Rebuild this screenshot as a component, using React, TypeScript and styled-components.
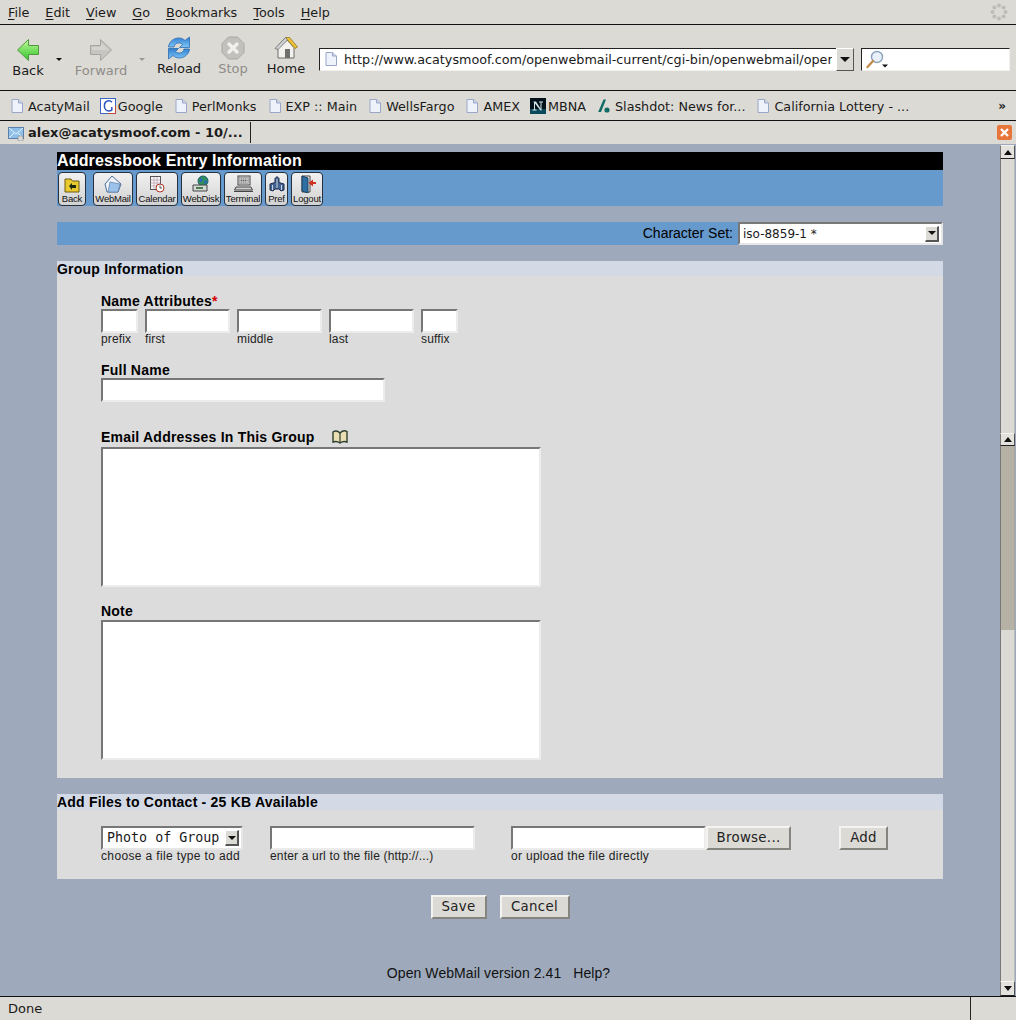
import React, { ReactElement } from 'react';
import styled, { createGlobalStyle } from 'styled-components';

const GlobalStyle = createGlobalStyle`
  html, body {
    margin: 0;
    padding: 0;
    width: 1016px;
    height: 1020px;
    overflow: hidden;
    background: #dcdad5;
  }
  * { box-sizing: border-box; }
`;

const CHROME_FONT = `"DejaVu Sans", sans-serif`;
const PAGE_FONT = `"Liberation Sans", Arial, sans-serif`;

const Window = styled.div`
  width: 1016px;
  height: 1020px;
  display: flex;
  flex-direction: column;
  font-family: ${CHROME_FONT};
  font-size: 13px;
  color: #1a1a1a;
`;

/* menu bar */
const MenuBar = styled.div`
  height: 25px;
  flex: none;
  display: flex;
  align-items: center;
  padding: 0 8px;
  gap: 16px;
  font-size: 12.75px;
  background: #dcdad5;
  border-bottom: 1px solid #111;
`;

const MenuItem = styled.span`
  line-height: 24px;
  padding-top: 1px;
  u { text-underline-offset: 2px; }
`;

const Throbber = styled.svg`
  margin-left: auto;
  margin-right: -1px;
`;

/* navigation toolbar */
const NavBar = styled.div`
  height: 66px;
  flex: none;
  display: flex;
  align-items: flex-start;
  padding-left: 4px;
  background: #dcdad5;
  border-bottom: 1px solid #111;
`;

const NavButton = styled.div<{ $w: number; $top: number; $off?: boolean }>`
  width: ${p => p.$w}px;
  padding-top: ${p => p.$top}px;
  display: flex;
  flex-direction: column;
  align-items: center;
  line-height: 16px;
  color: ${p => (p.$off ? '#8e8d89' : '#1a1a1a')};
`;

const NavIcon = styled.svg`
  display: block;
  margin-bottom: 1px;
`;

const DropArrow = styled.div<{ $w: number; $off?: boolean }>`
  width: ${p => p.$w}px;
  padding-top: 33px;
  display: flex;
  justify-content: center;
  &::after {
    content: '';
    border-left: 3px solid transparent;
    border-right: 3px solid transparent;
    border-top: 3px solid ${p => (p.$off ? '#999' : '#111')};
  }
`;

const UrlGroup = styled.div`
  margin: 23px 0 0 3px;
  display: flex;
  align-items: stretch;
  height: 23px;
`;

const UrlBox = styled.div`
  width: 517px;
  display: flex;
  align-items: center;
  padding: 0 0 1px 3px;
  background: #fff;
  border: 1px solid #222;
  border-right: none;
  border-bottom: 1px solid #f2f1ee;
  white-space: nowrap;
  overflow: hidden;
  font-size: 12.75px;
`;

const UrlText = styled.span`
  margin-left: 5px;
  width: 488px;
  overflow: hidden;
  display: block;
`;

const ComboButton = styled.div`
  width: 18px;
  display: flex;
  align-items: center;
  justify-content: center;
  background: #dcdad5;
  border: 1px solid #222;
  border-top-color: #fff;
  border-left-color: #fff;
  border-right-color: #555;
  border-bottom-color: #555;
  &::after {
    content: '';
    border-left: 5px solid transparent;
    border-right: 5px solid transparent;
    border-top: 5px solid #111;
  }
`;

const SearchBox = styled.div`
  width: 149px;
  margin-left: 7px;
  display: flex;
  align-items: center;
  padding-left: 3px;
  background: #fff;
  border: 1px solid #222;
  border-right-color: #f2f1ee;
  border-bottom-color: #f2f1ee;
`;

/* bookmarks */
const BookmarkBar = styled.div`
  height: 30px;
  flex: none;
  display: flex;
  align-items: center;
  padding: 1px 10px 0 9px;
  gap: 10px;
  font-size: 12.75px;
  background: #dcdad5;
  border-bottom: 1px solid #111;
  white-space: nowrap;
`;

const Bookmark = styled.div<{ $gap?: number }>`
  display: flex;
  align-items: center;
  gap: ${p => p.$gap ?? 3}px;
`;

const Chevron = styled.span`
  margin-left: auto;
  font-weight: bold;
  font-size: 12px;
`;

/* tabs */
const TabBar = styled.div`
  height: 23px;
  flex: none;
  display: flex;
  align-items: center;
  justify-content: space-between;
  padding-right: 4px;
  background: #dcdad5;
`;

const Tab = styled.div`
  width: 251px;
  height: 21px;
  display: flex;
  align-items: center;
  padding-left: 8px;
  gap: 4px;
  font-weight: bold;
  white-space: nowrap;
  border-right: 1px solid #222;
`;

const CloseTab = styled.div`
  width: 15px;
  height: 15px;
  border-radius: 2px;
  background: #e8763a;
  display: flex;
  align-items: center;
  justify-content: center;
`;

/* main viewport */
const Viewport = styled.div`
  flex: 1;
  min-height: 0;
  display: flex;
  background: #9eaabb;
`;

const Page = styled.div`
  width: 1000px;
  flex: none;
  padding: 8px 57px 0;
  font-family: ${PAGE_FONT};
  font-size: 14px;
  color: #000;
`;

const TitleBar = styled.div`
  height: 18px;
  background: #000;
  color: #fff;
  font-weight: bold;
  font-size: 16px;
  line-height: 18px;
  letter-spacing: 0.17px;
  white-space: nowrap;
`;

const IconBand = styled.div`
  height: 36px;
  background: #6699cc;
  display: flex;
  align-items: flex-end;
  padding-left: 1px;
  gap: 3px;
`;

const ToolButton = styled.div<{ $w: number; $ml?: number }>`
  width: ${p => p.$w}px;
  height: 34px;
  margin-left: ${p => p.$ml ?? 0}px;
  border: 1px solid #26313f;
  border-radius: 4px;
  background: linear-gradient(#f1f1f1, #d2d2d2);
  display: flex;
  flex-direction: column;
  align-items: center;
  padding-top: 2px;
  font-size: 9.5px;
  line-height: 11px;
  letter-spacing: -0.2px;
  color: #111;
  white-space: nowrap;
  overflow: hidden;
`;

const ToolIcon = styled.svg`
  display: block;
  height: 18px;
  width: 20px;
  flex: none;
`;

const CharsetBand = styled.div`
  height: 23px;
  margin-top: 16px;
  background: #6699cc;
  display: flex;
  align-items: center;
  justify-content: flex-end;
  gap: 5px;
`;

const CharsetLabel = styled.span`
  padding-bottom: 2px;
`;

const SelectBox = styled.div<{ $w: number; $mono?: boolean }>`
  width: ${p => p.$w}px;
  height: ${p => (p.$mono ? 24 : 23)}px;
  display: flex;
  align-items: center;
  justify-content: space-between;
  padding: 0 2px 0 ${p => (p.$mono ? 4 : 3)}px;
  background: #fff;
  border-top: 2px solid #777;
  border-left: 2px solid #777;
  border-right: 2px solid #e6e6e6;
  border-bottom: 2px solid #e6e6e6;
  font-family: ${p => (p.$mono ? `"DejaVu Sans Mono", monospace` : CHROME_FONT)};
  font-size: ${p => (p.$mono ? '13.33px' : '12px')};
  color: #1a1a1a;
  white-space: nowrap;
`;

const SelectText = styled.span`
  margin-top: -1px;
`;

const SelectArrow = styled.span`
  width: 14px;
  height: 16px;
  flex: none;
  background: #dcdad5;
  border-top: 1px solid #fff;
  border-left: 1px solid #fff;
  border-right: 2px solid #555;
  border-bottom: 2px solid #555;
  display: flex;
  align-items: center;
  justify-content: center;
  &::after {
    content: '';
    border-left: 4px solid transparent;
    border-right: 4px solid transparent;
    border-top: 4px solid #111;
  }
`;

const SectionHeader = styled.div<{ $h: number }>`
  height: ${p => p.$h}px;
  margin-top: 16px;
  background: #d3dae6;
  font-weight: bold;
  font-size: 14px;
  line-height: 17px;
  letter-spacing: 0.22px;
  white-space: nowrap;
`;

const GroupBody = styled.div`
  background: #dcdcdc;
  padding: 17px 0 18px 44px;
`;

const FieldLabel = styled.div<{ $mt?: number; $h: number }>`
  height: ${p => p.$h}px;
  margin-top: ${p => p.$mt ?? 0}px;
  line-height: 16px;
  font-weight: bold;
  font-size: 14px;
  letter-spacing: 0.22px;
  display: flex;
  align-items: flex-start;
  gap: 16px;
  white-space: nowrap;
`;

const Required = styled.span`
  color: #d40000;
`;

const NameRow = styled.div`
  display: flex;
  gap: 7px;
`;

const NameCol = styled.div<{ $w: number }>`
  width: ${p => p.$w}px;
  display: flex;
  flex-direction: column;
`;

const TextBox = styled.input<{ $w?: number }>`
  display: block;
  width: ${p => (p.$w ? `${p.$w}px` : '100%')};
  height: 24px;
  margin: 0;
  padding: 0 2px;
  background: #fff;
  border-style: solid;
  border-width: 2px;
  border-color: #777 #ececec #ececec #777;
  outline: none;
`;

const TextArea = styled.textarea`
  display: block;
  width: 440px;
  height: 140px;
  margin: 0;
  padding: 2px;
  resize: none;
  background: #fff;
  border-style: solid;
  border-width: 2px;
  border-color: #777 #ececec #ececec #777;
  outline: none;
`;

const Caption = styled.div<{ $ls?: number }>`
  font-size: 12px;
  line-height: 13px;
  letter-spacing: ${p => p.$ls ?? 0.15}px;
  color: #222;
  white-space: nowrap;
`;

const FileBody = styled.div`
  height: 69px;
  background: #dcdcdc;
  padding: 16px 0 0 44px;
  display: flex;
  align-items: flex-start;
`;

const FileCol = styled.div<{ $w: number }>`
  width: ${p => p.$w}px;
  flex: none;
`;

const FileRow = styled.div`
  display: flex;
`;

const PushButton = styled.button<{ $w: number; $h?: number }>`
  width: ${p => p.$w}px;
  height: ${p => p.$h ?? 24}px;
  margin: 0;
  padding: 0 0 2px;
  background: #dcdad5;
  border-style: solid;
  border-width: 2px;
  border-color: #f4f3f0 #85847f #85847f #f4f3f0;
  font-family: ${CHROME_FONT};
  font-size: 13.33px;
  letter-spacing: 0.3px;
  color: #222;
`;

const FormActions = styled.div`
  margin-top: 16px;
  display: flex;
  justify-content: center;
  gap: 13px;
`;

const Footer = styled.div`
  margin-top: 46px;
  padding-right: 3px;
  text-align: center;
  line-height: 16px;
  letter-spacing: 0.08px;
  white-space: pre;
  color: #111;
`;

/* scrollbar */
const Scrollbar = styled.div`
  width: 16px;
  flex: none;
  display: flex;
  flex-direction: column;
  padding-top: 1px;
  padding-right: 1px;
`;

const ScrollButton = styled.div<{ $h: number; $down?: boolean }>`
  height: ${p => p.$h}px;
  flex: none;
  background: #e4e2dd;
  border: 1px solid #f4f3f0;
  border-left-color: #777;
  border-right-color: #555;
  border-bottom-color: #222;
  display: flex;
  align-items: center;
  justify-content: center;
  &::after {
    content: '';
    border-left: 4px solid transparent;
    border-right: 4px solid transparent;
    ${p => (p.$down ? 'border-top: 5px solid #111;' : 'border-bottom: 5px solid #111;')}
  }
`;

const ScrollTrack = styled.div<{ $h?: number; $thumb?: boolean }>`
  ${p => (p.$h ? `height: ${p.$h}px; flex: none;` : 'flex: 1;')}
  background: ${p => (p.$thumb ? '#b5b2a5' : '#dcdad5')};
  border-left: 1px solid #777;
  border-right: 1px solid ${p => (p.$thumb ? '#a9a699' : '#bbb')};
`;

/* status bar */
const StatusBar = styled.div`
  height: 24px;
  flex: none;
  display: flex;
  align-items: center;
  padding-left: 8px;
  background: #dcdad5;
  border-top: 1px solid #111;
`;

const StatusGrip = styled.div`
  margin-left: auto;
  width: 46px;
  height: 100%;
  border-left: 1px solid #222;
`;

/* drawings */
const PageIcon = (): ReactElement => (
  <svg width="16" height="16" viewBox="0 0 16 16">
    <path d="M3 1.500h6.500L13.500 5v9.500H3z" fill="#eef2fb" stroke="#9aa6c8" />
    <path d="M9.500 1.500V5h4" fill="#cdd6ee" stroke="#9aa6c8" />
  </svg>
);

const GoogleIcon = (): ReactElement => (
  <svg width="16" height="16" viewBox="0 0 16 16">
    <rect x="0.500" y="0.500" width="15" height="15" fill="#fff" stroke="#3a66c4" />
    <path d="M15.500 8v7.500H8" fill="none" stroke="#c9463a" />
    <path d="M12 4.200C11 3 9.600 2.600 8.400 2.800 5.800 3.200 4.400 5.400 4.400 8c0 2.800 1.800 5 4.400 5 1.200 0 2.200-.3 3-.8V9" fill="none" stroke="#2a58c0" strokeWidth="1.500" />
  </svg>
);

const NetscapeIcon = (): ReactElement => (
  <svg width="16" height="16" viewBox="0 0 16 16">
    <rect width="16" height="16" fill="#03111a" />
    <rect y="11" width="16" height="5" fill="#0b4a5a" />
    <path d="M3.500 3.500h2.500l4.500 7V4.500h-1.500v-1h4v1h-1.500V12.500h-1L5 5.500v6h1.500v1h-4v-1H4V4.500H3.500z" fill="#cfe4ea" />
  </svg>
);

const SlashdotIcon = (): ReactElement => (
  <svg width="16" height="16" viewBox="0 0 16 16">
    <path d="M7.500 1.500h2.500L5 14H2.200z" fill="#0f6b63" />
    <circle cx="11" cy="12" r="2.600" fill="#0f6b63" />
  </svg>
);

const MailTabIcon = (): ReactElement => (
  <svg width="16" height="16" viewBox="0 0 16 16">
    <rect x="0.500" y="2.500" width="15" height="11" fill="#8fc0ea" stroke="#5b7fa8" />
    <path d="M1 3l7 6 7-6M1 13l5-5M15 13l-5-5" fill="none" stroke="#e8f2fb" />
    <rect x="10" y="11" width="5" height="5" rx="1" fill="#d9d9d9" stroke="#777" strokeWidth="0.500" />
  </svg>
);

const BackIcon = (): ReactElement => (
  <NavIcon width="24" height="24" viewBox="0 0 24 24">
    <defs>
      <linearGradient id="backFill" x1="0" y1="0" x2="0" y2="1">
        <stop offset="0" stopColor="#c4f99a" />
        <stop offset="1" stopColor="#2dc52a" />
      </linearGradient>
    </defs>
    <path d="M1.500 12L12.500 1.500V7.500H22.500V16.500H12.500V22.500z" fill="url(#backFill)" stroke="#4f9a3e" strokeWidth="1" strokeLinejoin="round" />
  </NavIcon>
);

const ForwardIcon = (): ReactElement => (
  <NavIcon width="24" height="24" viewBox="0 0 24 24">
    <path d="M22.500 12L11.500 1.500V7.500H1.500V16.500H11.500V22.500z" fill="#c6c5c1" stroke="#a5a4a0" strokeLinejoin="round" />
    <path d="M3 9h9V4.500L20 12H3z" fill="#d4d3cf" />
  </NavIcon>
);

const ReloadIcon = (): ReactElement => (
  <NavIcon width="24" height="24" viewBox="0 0 24 24">
    <defs>
      <linearGradient id="reloadFill" x1="0" y1="0" x2="0" y2="1">
        <stop offset="0" stopColor="#2f7fd0" />
        <stop offset="1" stopColor="#7fc6f6" />
      </linearGradient>
    </defs>
    <path d="M1.500 11C2 5.500 7 2 11.500 2c3 0 5 1 6.500 2.500L22.500 1V11.500H12.500L15.500 8.500C14.500 7.500 13 7 11.500 7 9 7 7.500 8.500 7 11z" fill="url(#reloadFill)" stroke="#2c6cb0" strokeWidth="0.800" />
    <path d="M22.500 13C22 18.500 17 22 12.500 22c-3 0-5-1-6.500-2.500L1.500 23V12.500H11.500L8.500 15.500C9.500 16.500 11 17 12.500 17 15 17 16.500 15.500 17 13z" fill="url(#reloadFill)" stroke="#2c6cb0" strokeWidth="0.800" />
  </NavIcon>
);

const StopIcon = (): ReactElement => (
  <NavIcon width="24" height="24" viewBox="0 0 24 24">
    <path d="M7.500 1h9L23 7.500v9L16.500 23h-9L1 16.500v-9z" fill="#c2c1bd" stroke="#a9a8a4" />
    <path d="M8 8l8 8M16 8l-8 8" stroke="#f1f0ec" strokeWidth="3.400" strokeLinecap="round" />
  </NavIcon>
);

const HomeIcon = (): ReactElement => (
  <NavIcon width="24" height="24" viewBox="0 0 24 24">
    <path d="M4 11.500V22h16V11.500L13 4z" fill="#f3f2ee" stroke="#6d6c68" />
    <path d="M3 11L11.500 1.500H15.500l8 9.500-2.500 1.500-7.500-8.500z" fill="#f2c233" stroke="#8a7420" strokeWidth="0.800" />
    <path d="M1 12.500l3 1L13.500 4l-2-2.500z" fill="#cfd3d8" stroke="#6d6c68" strokeWidth="0.800" />
    <rect x="11" y="13" width="5" height="9" fill="#6f6f6d" />
  </NavIcon>
);

const SearchIcon = (): ReactElement => (
  <svg width="26" height="20" viewBox="0 0 26 20">
    <circle cx="12" cy="7" r="5.500" fill="#e8f1fb" stroke="#8aa0bb" strokeWidth="1.400" />
    <path d="M8 11l-5.500 6" stroke="#c08a50" strokeWidth="2.400" strokeLinecap="round" />
    <path d="M17 14.500h6l-3 3z" fill="#111" />
  </svg>
);

const BookIcon = (): ReactElement => (
  <svg width="18" height="16" viewBox="0 0 18 16">
    <path d="M2 3c2.500-1.500 5-1 7 1 2-2 4.500-3 7-1.500V13c-2.500-1-5-.5-7 1-2-1.500-4.500-2-7-1z" fill="#eadfb4" stroke="#2f3f30" strokeWidth="1.400" />
    <path d="M9 4V14" stroke="#2f3f30" strokeWidth="1.200" />
  </svg>
);

const ToolGlyphs: Record<string, ReactElement> = {
  back: (
    <>
      <path d="M3 4h6l1.500 2H17v11H3z" fill="#e9c92e" stroke="#6c5c10" />
      <path d="M7 11l3-3v2h4v3h-4v2z" fill="#1b2a10" />
    </>
  ),
  webmail: (
    <>
      <path d="M9 1l9 8-3 8H4L2 9z" fill="#eef2f8" stroke="#4d6f9c" />
      <path d="M7 7l10 2-2 8H5z" fill="#9cc2ea" stroke="#4d6f9c" strokeWidth="0.600" />
    </>
  ),
  calendar: (
    <>
      <rect x="3.500" y="1.500" width="10" height="13" fill="#f6f6f6" stroke="#555" />
      <path d="M3.500 5h10M3.500 8h10M3.500 11h10M7 2v12M10 2v12" stroke="#b08aa0" strokeWidth="0.600" />
      <circle cx="13" cy="13" r="4" fill="#fff" stroke="#b03020" />
      <path d="M13 10.500V13h2" stroke="#222" strokeWidth="0.800" fill="none" />
    </>
  ),
  webdisk: (
    <>
      <circle cx="12" cy="6" r="5" fill="#2f8f5a" stroke="#1f5f6f" />
      <path d="M9 3c2 0 3 1 2 3s-2 1-2 0zM14 5l2 1-1 3-2-1z" fill="#2b62c4" />
      <path d="M2 10h14v6H2z" fill="#d3d7d6" stroke="#444" />
      <rect x="5" y="12" width="7" height="2" fill="#4b7a4b" />
    </>
  ),
  terminal: (
    <>
      <rect x="5" y="1" width="12" height="9" fill="#e6e6e6" stroke="#444" />
      <rect x="6.500" y="2.500" width="9" height="6" fill="#dedede" stroke="#777" strokeWidth="0.500" />
      <path d="M7.500 4h7M7.500 5.500h7M7.500 7h7" stroke="#333" strokeWidth="0.700" strokeDasharray="1.500 0.500" />
      <path d="M3 12h15l1.500 3H1.500z" fill="#cfcfcf" stroke="#444" />
      <path d="M1 16.500h19" stroke="#444" />
    </>
  ),
  pref: (
    <>
      <path d="M10 1.500l2 2v4l5 1.500v6l-3 1-2-2H8l-2 2-3-1V9l5-1.500v-4z" fill="#44628f" stroke="#1d2c4c" />
      <path d="M10 4v9M5.500 10v5M14.500 10v5" stroke="#c9d2e4" />
    </>
  ),
  logout: (
    <>
      <path d="M5 1h8v16H5z" fill="#f0eee8" stroke="#444" />
      <path d="M5 1l6 2v15l-6-2z" fill="#2f6fa4" stroke="#1d3f60" />
      <path d="M19 7h-3V4.500L11.500 8l4.500 3.500V9h3z" fill="#d2301f" />
    </>
  ),
};

const Tool = ({ kind, label, w, ml }: { kind: string; label: string; w: number; ml?: number }): ReactElement => (
  <ToolButton $w={w} $ml={ml}>
    <ToolIcon viewBox="0 0 20 18">{ToolGlyphs[kind]}</ToolIcon>
    {label}
  </ToolButton>
);

const MENUS = ['File', 'Edit', 'View', 'Go', 'Bookmarks', 'Tools', 'Help'];
const NAME_FIELDS: [string, number][] = [
  ['prefix', 37],
  ['first', 85],
  ['middle', 85],
  ['last', 85],
  ['suffix', 37],
];
const URL = 'http://www.acatysmoof.com/openwebmail-current/cgi-bin/openwebmail/openwebmail-abook.pl';

const App = (): ReactElement => {
  return (
    <>
      <GlobalStyle />
      <Window>
        <MenuBar>
          {MENUS.map(m => (
            <MenuItem key={m}>
              <u>{m[0]}</u>
              {m.slice(1)}
            </MenuItem>
          ))}
          <Throbber width="20" height="20" viewBox="0 0 20 20">
            {[0, 45, 90, 135, 180, 225, 270, 315].map(a => (
              <circle
                key={a}
                cx={10 + 6.5 * Math.cos((a * Math.PI) / 180)}
                cy={10 + 6.5 * Math.sin((a * Math.PI) / 180)}
                r="2"
                fill="#bdbcb7"
              />
            ))}
          </Throbber>
        </MenuBar>

        <NavBar>
          <NavButton $w={48} $top={13}>
            <BackIcon />
            Back
          </NavButton>
          <DropArrow $w={14} />
          <NavButton $w={70} $top={13} $off>
            <ForwardIcon />
            Forward
          </NavButton>
          <DropArrow $w={12} $off />
          <NavButton $w={62} $top={11}>
            <ReloadIcon />
            Reload
          </NavButton>
          <NavButton $w={46} $top={11} $off>
            <StopIcon />
            Stop
          </NavButton>
          <NavButton $w={60} $top={11}>
            <HomeIcon />
            Home
          </NavButton>
          <UrlGroup>
            <UrlBox>
              <PageIcon />
              <UrlText>{URL}</UrlText>
            </UrlBox>
            <ComboButton />
            <SearchBox>
              <SearchIcon />
            </SearchBox>
          </UrlGroup>
        </NavBar>

        <BookmarkBar>
          <Bookmark><PageIcon />AcatyMail</Bookmark>
          <Bookmark $gap={2}><GoogleIcon />Google</Bookmark>
          <Bookmark><PageIcon />PerlMonks</Bookmark>
          <Bookmark><PageIcon />EXP :: Main</Bookmark>
          <Bookmark><PageIcon />WellsFargo</Bookmark>
          <Bookmark><PageIcon />AMEX</Bookmark>
          <Bookmark $gap={2}><NetscapeIcon />MBNA</Bookmark>
          <Bookmark><SlashdotIcon />Slashdot: News for...</Bookmark>
          <Bookmark><PageIcon />California Lottery - ...</Bookmark>
          <Chevron>»</Chevron>
        </BookmarkBar>

        <TabBar>
          <Tab>
            <MailTabIcon />
            alex@acatysmoof.com - 10/...
          </Tab>
          <CloseTab>
            <svg width="11" height="11" viewBox="0 0 11 11">
              <path d="M2 2l7 7M9 2l-7 7" stroke="#fff" strokeWidth="2.400" />
            </svg>
          </CloseTab>
        </TabBar>

        <Viewport>
          <Page>
            <TitleBar>Addressbook Entry Information</TitleBar>
            <IconBand>
              <Tool kind="back" label="Back" w={28} />
              <Tool kind="webmail" label="WebMail" w={40} ml={4} />
              <Tool kind="calendar" label="Calendar" w={42} />
              <Tool kind="webdisk" label="WebDisk" w={40} />
              <Tool kind="terminal" label="Terminal" w={38} />
              <Tool kind="pref" label="Pref" w={23} />
              <Tool kind="logout" label="Logout" w={32} />
            </IconBand>

            <CharsetBand>
              <CharsetLabel>Character Set:</CharsetLabel>
              <SelectBox $w={205}>
                iso-8859-1 *
                <SelectArrow />
              </SelectBox>
            </CharsetBand>

            <SectionHeader $h={15}>Group Information</SectionHeader>
            <GroupBody>
              <FieldLabel $h={16}>
                <span>Name Attributes<Required>*</Required></span>
              </FieldLabel>
              <NameRow>
                {NAME_FIELDS.map(([name, w]) => (
                  <NameCol key={name} $w={w}>
                    <TextBox />
                    <Caption>{name}</Caption>
                  </NameCol>
                ))}
              </NameRow>
              <FieldLabel $h={16} $mt={16}>Full Name</FieldLabel>
              <TextBox $w={284} />
              <FieldLabel $h={18} $mt={27}>
                Email Addresses In This Group
                <BookIcon />
              </FieldLabel>
              <TextArea />
              <FieldLabel $h={17} $mt={16}>Note</FieldLabel>
              <TextArea />
            </GroupBody>

            <SectionHeader $h={16}>Add Files to Contact - 25 KB Available</SectionHeader>
            <FileBody>
              <FileCol $w={169}>
                <SelectBox $w={142} $mono>
                  <SelectText>Photo of Group</SelectText>
                  <SelectArrow />
                </SelectBox>
                <Caption $ls={0.36}>choose a file type to add</Caption>
              </FileCol>
              <FileCol $w={241}>
                <TextBox $w={205} />
                <Caption $ls={0.17}>enter a url to the file (http://...)</Caption>
              </FileCol>
              <FileCol $w={328}>
                <FileRow>
                  <TextBox $w={195} />
                  <PushButton $w={85}>Browse...</PushButton>
                </FileRow>
                <Caption $ls={0.3}>or upload the file directly</Caption>
              </FileCol>
              <FileCol $w={49}>
                <PushButton $w={49}>Add</PushButton>
              </FileCol>
            </FileBody>

            <FormActions>
              <PushButton $w={56}>Save</PushButton>
              <PushButton $w={70}>Cancel</PushButton>
            </FormActions>
            <Footer>Open WebMail version 2.41   Help?</Footer>
          </Page>

          <Scrollbar>
            <ScrollButton $h={14} />
            <ScrollTrack $h={274} />
            <ScrollButton $h={13} />
            <ScrollTrack $h={184} $thumb />
            <ScrollTrack />
            <ScrollButton $h={15} $down />
          </Scrollbar>
        </Viewport>

        <StatusBar>
          Done
          <StatusGrip />
        </StatusBar>
      </Window>
    </>
  );
};

export default App;
